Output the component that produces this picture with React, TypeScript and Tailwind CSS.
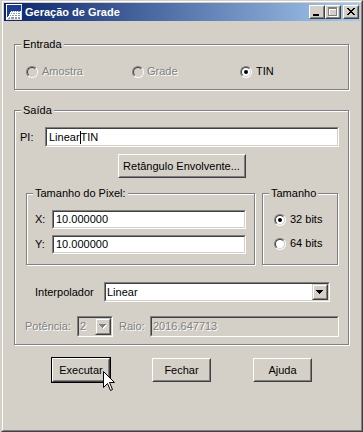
import React from "react";

const dim = "text-[#808080] [text-shadow:1px_1px_0_#fff]";

const Group = ({
  label,
  className = "",
  children,
}: {
  label: string;
  className?: string;
  children?: React.ReactNode;
}) => (
  <div
    className={`relative border border-[#808080] shadow-[inset_1px_1px_0_#fff,1px_1px_0_#fff] ${className}`}
  >
    <span className="absolute -top-[7px] left-[6px] px-[2px] bg-[#d4d0c8] leading-[13px] whitespace-nowrap">
      {label}
    </span>
    {children}
  </div>
);

const Radio = ({ checked, disabled }: { checked?: boolean; disabled?: boolean }) => (
  <span className="inline-flex shrink-0 w-[12px] h-[12px] rounded-full border border-t-[#808080] border-l-[#808080] border-r-white border-b-white">
    <span
      className={`flex items-center justify-center w-full h-full rounded-full border border-t-[#404040] border-l-[#404040] border-r-[#d4d0c8] border-b-[#d4d0c8] ${
        disabled ? "bg-[#d4d0c8]" : "bg-white"
      }`}
    >
      {checked && <span className="w-[4px] h-[4px] rounded-full bg-black" />}
    </span>
  </span>
);

const Field = ({
  className = "",
  disabled,
  children,
}: {
  className?: string;
  disabled?: boolean;
  children?: React.ReactNode;
}) => (
  <div
    className={`shrink-0 border border-t-[#808080] border-l-[#808080] border-r-white border-b-white ${className}`}
  >
    <div
      className={`h-full flex items-center overflow-hidden whitespace-nowrap border border-t-[#404040] border-l-[#404040] border-r-[#d4d0c8] border-b-[#d4d0c8] ${
        disabled ? "bg-[#d4d0c8]" : "bg-white"
      }`}
    >
      {children}
    </div>
  </div>
);

const DropBtn = ({ disabled, className = "" }: { disabled?: boolean; className?: string }) => (
  <div
    className={`h-full shrink-0 border border-t-[#d4d0c8] border-l-[#d4d0c8] border-r-[#404040] border-b-[#404040] bg-[#d4d0c8] ${className}`}
  >
    <div className="h-full flex items-center justify-center border border-t-white border-l-white border-r-[#808080] border-b-[#808080]">
      <svg width="8" height="5" viewBox="0 0 8 5" shapeRendering="crispEdges">
        {disabled && (
          <path d="M1 1H8V2H7V3H6V4H5V5H4V4H3V3H2V2H1Z" fill="#fff" />
        )}
        <path
          d="M0 0H7V1H6V2H5V3H4V4H3V3H2V2H1V1H0Z"
          fill={disabled ? "#808080" : "#000"}
        />
      </svg>
    </div>
  </div>
);

const Button = ({ children, className = "" }: { children?: React.ReactNode; className?: string }) => (
  <div
    className={`border border-t-white border-l-white border-r-[#404040] border-b-[#404040] bg-[#d4d0c8] ${className}`}
  >
    <div className="h-full flex items-center justify-center border border-t-[#d4d0c8] border-l-[#d4d0c8] border-r-[#808080] border-b-[#808080] whitespace-nowrap">
      {children}
    </div>
  </div>
);

const CapBtn = ({ children, className = "" }: { children?: React.ReactNode; className?: string }) => (
  <div
    className={`w-[16px] h-[14px] border border-t-white border-l-white border-r-[#404040] border-b-[#404040] bg-[#d4d0c8] ${className}`}
  >
    <div className="w-full h-full border border-t-[#d4d0c8] border-l-[#d4d0c8] border-r-[#808080] border-b-[#808080]">
      {children}
    </div>
  </div>
);

const closeRows = [0, 1, 2, 3, 4, 5, 6];

export default function App() {
  return (
    <div className="relative w-[363px] h-[432px] pl-[1px] bg-[#d4d0c8] text-[11px] leading-[13px] text-black font-['Liberation_Sans',Arial,sans-serif] overflow-hidden select-none">
      <div className="h-full border border-t-[#d4d0c8] border-l-[#d4d0c8] border-r-[#404040] border-b-[#404040]">
        <div className="h-full border border-t-white border-l-white border-r-[#808080] border-b-[#808080] p-[1px]">
          {/* title bar */}
          <div className="h-[18px] flex items-center pl-[2px] pr-[1px] bg-[linear-gradient(to_right,#0a246a,#a6caf0)]">
            <svg width="16" height="16" viewBox="0 0 16 16" shapeRendering="crispEdges">
              <rect x="0" y="0" width="16" height="16" fill="#dcdcdc" />
              <rect x="1" y="1" width="14" height="14" fill="#1b3c8f" />
              <polygon points="1,15 6,7 15,7 15,15" fill="#8c9ab8" />
              <path d="M1 15L6 7M4 15L8 7M8 15L10 7M11 15L12 7M14 15L14 7" stroke="#fff" strokeWidth="1" />
              <path d="M3 12H15M4 10H15M5 8H15" stroke="#fff" strokeWidth="1" />
              <rect x="0" y="0" width="16" height="1" fill="#fff" />
              <rect x="0" y="0" width="1" height="16" fill="#fff" />
            </svg>
            <span className="ml-[3px] text-white font-bold whitespace-nowrap">Geração de Grade</span>
            <div className="flex-1" />
            <CapBtn>
              <svg width="12" height="10" viewBox="0 0 12 10" shapeRendering="crispEdges">
                <rect x="2" y="7" width="6" height="2" fill="#000" />
              </svg>
            </CapBtn>
            <CapBtn>
              <svg width="12" height="10" viewBox="0 0 12 10" shapeRendering="crispEdges">
                <path d="M2 1H11V10H2ZM3 3V9H10V3Z" fill="#fff" fillRule="evenodd" />
                <path d="M1 0H10V9H1ZM2 2V8H9V2Z" fill="#808080" fillRule="evenodd" />
              </svg>
            </CapBtn>
            <CapBtn className="ml-[2px]">
              <svg width="12" height="10" viewBox="0 0 12 10" shapeRendering="crispEdges">
                {closeRows.map((r) => (
                  <React.Fragment key={r}>
                    <rect x={2 + r} y={1 + r} width="2" height="1" fill="#000" />
                    <rect x={8 - r} y={1 + r} width="2" height="1" fill="#000" />
                  </React.Fragment>
                ))}
              </svg>
            </CapBtn>
          </div>

          {/* Entrada */}
          <Group label="Entrada" className="ml-[10px] mt-[23px] w-[335px] h-[46px]">
            <div className="flex items-center h-[13px] mt-[20px] pl-[11px]">
              <div className="flex items-center gap-[4px] w-[106px]">
                <Radio disabled />
                <span className={dim}>Amostra</span>
              </div>
              <div className="flex items-center gap-[3px] w-[108px]">
                <Radio disabled />
                <span className={dim}>Grade</span>
              </div>
              <div className="flex items-center gap-[4px]">
                <Radio checked />
                <span>TIN</span>
              </div>
            </div>
          </Group>

          {/* Saída */}
          <Group label="Saída" className="ml-[10px] mt-[20px] w-[335px] h-[235px]">
            <div className="flex items-center mt-[16px] pl-[5px]">
              <span className="w-[25px]">PI:</span>
              <Field className="w-[294px] h-[20px]">
                <span className="pl-[2px]">Linear</span>
                <span className="w-[1px] h-[13px] bg-black" />
                <span>TIN</span>
              </Field>
            </div>

            <Button className="mx-auto mt-[7px] w-[128px] h-[24px]">Retângulo Envolvente...</Button>

            <div className="flex mt-[15px] pl-[11px] gap-[7px]">
              <Group label="Tamanho do Pixel:" className="w-[229px] h-[72px]">
                <div className="flex items-center mt-[16px] pl-[8px]">
                  <span className="w-[17px]">X:</span>
                  <Field className="w-[194px] h-[19px]">
                    <span className="pl-[2px]">10.000000</span>
                  </Field>
                </div>
                <div className="flex items-center mt-[6px] pl-[8px]">
                  <span className="w-[17px]">Y:</span>
                  <Field className="w-[194px] h-[19px]">
                    <span className="pl-[2px]">10.000000</span>
                  </Field>
                </div>
              </Group>
              <Group label="Tamanho" className="w-[76px] h-[72px]">
                <div className="flex flex-col gap-[11px] mt-[19px] pl-[11px]">
                  <div className="flex items-center gap-[4px] h-[13px]">
                    <Radio checked />
                    <span>32 bits</span>
                  </div>
                  <div className="flex items-center gap-[4px] h-[13px]">
                    <Radio />
                    <span>64 bits</span>
                  </div>
                </div>
              </Group>
            </div>

            <div className="flex items-center mt-[17px] pl-[20px]">
              <span className="w-[69px]">Interpolador</span>
              <Field className="w-[226px] h-[20px]">
                <span className="flex-1 pl-[1px]">Linear</span>
                <DropBtn className="w-[16px]" />
              </Field>
            </div>

            <div className="flex items-center mt-[14px] pl-[10px]">
              <span className={`w-[52px] ${dim}`}>Potência:</span>
              <Field disabled className="w-[36px] h-[21px]">
                <span className={`flex-1 pl-[1px] ${dim}`}>2</span>
                <DropBtn disabled className="w-[16px]" />
              </Field>
              <span className={`ml-[6px] w-[31px] ${dim}`}>Raio:</span>
              <Field disabled className="w-[189px] h-[21px]">
                <span className={`pl-[1px] ${dim}`}>2016.647713</span>
              </Field>
            </div>
          </Group>

          {/* buttons */}
          <div className="flex items-center ml-[47px] mt-[12px]">
            <div className="w-[60px] h-[26px] border border-black">
              <Button className="w-full h-full">Executar</Button>
            </div>
            <Button className="ml-[41px] w-[59px] h-[24px]">Fechar</Button>
            <Button className="ml-[42px] w-[59px] h-[24px]">Ajuda</Button>
          </div>
        </div>
      </div>

      {/* mouse cursor */}
      <svg
        className="absolute left-[103px] top-[371px]"
        width="13"
        height="21"
        viewBox="0 0 13 21"
        shapeRendering="crispEdges"
      >
        <path
          d="M0.5 0.5V16.5L4.5 12.5L7.5 19.5L9.5 18.5L6.5 11.5H11.5Z"
          fill="#fff"
          stroke="#000"
          strokeWidth="1"
          shapeRendering="geometricPrecision"
        />
      </svg>
    </div>
  );
}
